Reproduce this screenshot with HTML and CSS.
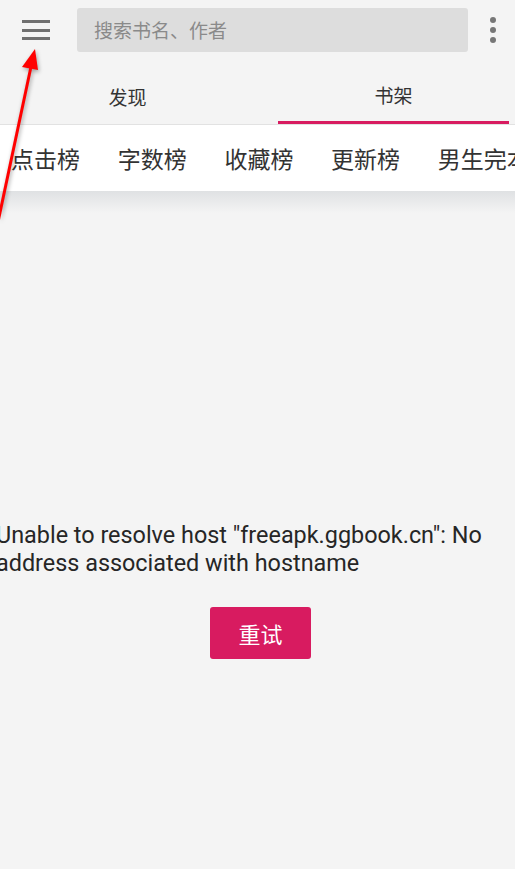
FILE: index.html
```html
<!DOCTYPE html>
<html>
<head>
    <title>书架</title>
    <link rel="stylesheet" href="styles.css">
</head>
<body>
    <div class="toolbar">
        <button class="menu-btn">
            <span></span><span></span><span></span>
        </button>
        <div class="search-box">搜索书名、作者</div>
        <button class="more-btn">
            <i></i><i></i><i></i>
        </button>
    </div>

    <div class="tabs">
        <div class="tab">发现</div>
        <div class="tab active">书架</div>
    </div>

    <div class="rank-bar">
        <span class="rank">点击榜</span>
        <span class="rank">字数榜</span>
        <span class="rank">收藏榜</span>
        <span class="rank">更新榜</span>
        <span class="rank">男生完本</span>
    </div>
    <div class="rank-shadow"></div>

    <div class="error-box">
        <p class="error-msg">Unable to resolve host "freeapk.ggbook.cn": No address associated with hostname</p>
        <button class="retry-btn">重试</button>
    </div>

    <!-- annotation arrow -->
    <svg class="arrow" width="60" height="230" viewBox="0 0 60 230">
        <line x1="-2" y1="222" x2="32" y2="62" stroke="#ff0000" stroke-width="3"/>
        <polygon points="35,49 22,67 38,70" fill="#ff0000"/>
    </svg>
</body>
</html>
```

FILE: styles.css
```css
body {
    margin: 0;
    width: 515px;
    height: 869px;
    overflow: hidden;
    position: relative;
    background-color: #f4f4f4;
    font-family: Roboto, "Noto Sans CJK SC", sans-serif;
    color: #333;
}
button {
    font-family: inherit;
    border: none;
    background: none;
    padding: 0;
    cursor: pointer;
}
.toolbar {
    display: flex;
    align-items: center;
    height: 60px;
}
.menu-btn {
    width: 28px;
    margin-left: 22px;
    margin-right: 27px;
    display: flex;
    flex-direction: column;
    gap: 5.5px;
}
.menu-btn span {
    display: block;
    height: 3px;
    background-color: #707070;
}
.search-box {
    width: 374px;
    height: 44px;
    padding-left: 17px;
    background-color: #dddddd;
    border-radius: 3px;
    font-size: 19px;
    line-height: 47px;
    color: #8a8a8a;
}
.more-btn {
    margin-left: 22px;
    display: flex;
    flex-direction: column;
    gap: 4px;
}
.more-btn i {
    width: 6px;
    height: 6px;
    border-radius: 50%;
    background-color: #777;
}
.tabs {
    display: flex;
    gap: 35px;
    padding-left: 12px;
    height: 65px;
    border-bottom: 1px solid #e2e2e2;
    box-sizing: border-box;
}
.tab {
    width: 231px;
    text-align: center;
    font-size: 19px;
    line-height: 77px;
    color: #333;
    box-sizing: border-box;
}
.tab.active {
    border-bottom: 3px solid #d81b60;
    line-height: 74px;
}
.rank-bar {
    display: flex;
    gap: 37.7px;
    padding-left: 11px;
    height: 66px;
    align-items: center;
    background-color: #fff;
    white-space: nowrap;
    overflow: hidden;
}
.rank {
    font-size: 23px;
    color: #333;
}
.rank-shadow {
    height: 22px;
    background: linear-gradient(#dfe1e3, #f4f4f4);
}
.error-box {
    margin-top: 308px;
    display: flex;
    flex-direction: column;
    align-items: center;
}
.error-msg {
    margin: 0 0 0 -4px;
    align-self: flex-start;
    width: 515px;
    font-size: 23.4px;
    line-height: 28px;
    color: #262626;
}
.retry-btn {
    margin-top: 30px;
    margin-left: 6px;
    width: 101px;
    height: 52px;
    border-radius: 3px;
    background-color: #d81b60;
    color: #fff;
    font-size: 22px;
}
.arrow {
    position: absolute;
    left: 0;
    top: 0;
    filter: drop-shadow(1px 2px 2px rgba(0,0,0,0.35));
}
```
